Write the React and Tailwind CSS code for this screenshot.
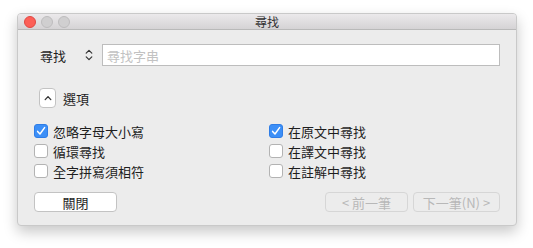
const FONT = { fontFamily: '"Noto Sans CJK TC", "Noto Sans", sans-serif' }

function Check({ checked }) {
  if (checked) {
    return (
      <span className="w-[14px] h-[14px] rounded-[3px] bg-[#3c8ff7] border border-[#2f7de6] flex items-center justify-center shrink-0">
        <svg width="10" height="10" viewBox="0 0 10 10">
          <path d="M1.6 5.4 L4 8 L8.6 1.6" fill="none" stroke="#fff" strokeWidth="1.5" strokeLinecap="round" strokeLinejoin="round" />
        </svg>
      </span>
    )
  }
  return <span className="w-[14px] h-[14px] rounded-[3px] bg-white border border-[#b3b3b3] shrink-0" />
}

function Option({ checked, label }) {
  return (
    <div className="flex items-center gap-[5px] h-[20px]">
      <Check checked={checked} />
      <span className="text-[13px] leading-none text-[#1e1e1e]">{label}</span>
    </div>
  )
}

export default function App() {
  const left = [
    { label: '忽略字母大小寫', checked: true },
    { label: '循環尋找', checked: false },
    { label: '全字拼寫須相符', checked: false },
  ]
  const right = [
    { label: '在原文中尋找', checked: true },
    { label: '在譯文中尋找', checked: false },
    { label: '在註解中尋找', checked: false },
  ]

  return (
    <div className="w-[533px] h-[248px] bg-white pt-[13px] pl-[17px]" style={FONT}>
      <div className="w-[500px] h-[213px] bg-[#ececec] rounded-[4px] border border-[#c9c9c9] shadow-[0_6px_14px_rgba(0,0,0,0.22)] overflow-hidden flex flex-col">
        {/* title bar */}
        <div className="h-[16px] bg-gradient-to-b from-[#ebe9eb] to-[#d5d3d5] border-b border-[#b9b9b9] flex items-center relative shrink-0">
          <div className="flex items-center gap-[5px] pl-[6px]">
            <span className="w-[12px] h-[12px] rounded-full bg-[#fc5f57] border border-[#df4843]" />
            <span className="w-[12px] h-[12px] rounded-full bg-[#d0cfd0] border border-[#bdbcbd]" />
            <span className="w-[12px] h-[12px] rounded-full bg-[#d0cfd0] border border-[#bdbcbd]" />
          </div>
          <span className="absolute left-0 right-0 text-center text-[12px] leading-none text-[#333]">尋找</span>
        </div>

        {/* search row */}
        <div className="flex items-center mt-[14px] h-[22px] pl-[22px] pr-[16px]">
          <span className="text-[13px] leading-none text-[#1e1e1e] w-[26px]">尋找</span>
          <svg className="ml-[19px]" width="8" height="12" viewBox="0 0 8 12">
            <path d="M1.2 4.2 L4 1.4 L6.8 4.2 M1.2 7.8 L4 10.6 L6.8 7.8" fill="none" stroke="#333" strokeWidth="1.2" strokeLinecap="round" strokeLinejoin="round" />
          </svg>
          <div className="ml-[9px] flex-1 h-[22px] bg-white border border-[#bdbdbd] flex items-center px-[4px]">
            <span className="text-[13px] leading-none text-[#c2c2c2]">尋找字串</span>
          </div>
        </div>

        {/* options disclosure */}
        <div className="flex items-center mt-[22px] pl-[21px] h-[20px]">
          <span className="w-[17px] h-[20px] bg-white border border-[#c3c3c3] rounded-[4px] flex items-center justify-center">
            <svg width="8" height="6" viewBox="0 0 8 6">
              <path d="M1.2 4.6 L4 1.6 L6.8 4.6" fill="none" stroke="#333" strokeWidth="1.3" strokeLinecap="round" strokeLinejoin="round" />
            </svg>
          </span>
          <span className="ml-[7px] text-[13px] leading-none text-[#1e1e1e]">選項</span>
        </div>

        {/* checkboxes */}
        <div className="flex mt-[13px]">
          <div className="pl-[16px] w-[251px] flex flex-col">
            {left.map((o) => (
              <Option key={o.label} {...o} />
            ))}
          </div>
          <div className="flex flex-col">
            {right.map((o) => (
              <Option key={o.label} {...o} />
            ))}
          </div>
        </div>

        {/* buttons */}
        <div className="flex items-center mt-[11px] pl-[16px] pr-[16px]">
          <button className="w-[83px] h-[20px] bg-white border border-[#c3c3c3] rounded-[4px] text-[13px] leading-none text-[#1e1e1e]">
            關閉
          </button>
          <div className="flex-1" />
          <button className="w-[83px] h-[20px] bg-[#ececec] border border-[#d6d6d6] rounded-[4px] text-[13px] leading-none text-[#b8b8b8]">
            &lt; 前一筆
          </button>
          <button className="ml-[5px] w-[87px] h-[20px] bg-[#ececec] border border-[#d6d6d6] rounded-[4px] text-[13px] leading-none text-[#b8b8b8]">
            下一筆(N) &gt;
          </button>
        </div>
      </div>
    </div>
  )
}
